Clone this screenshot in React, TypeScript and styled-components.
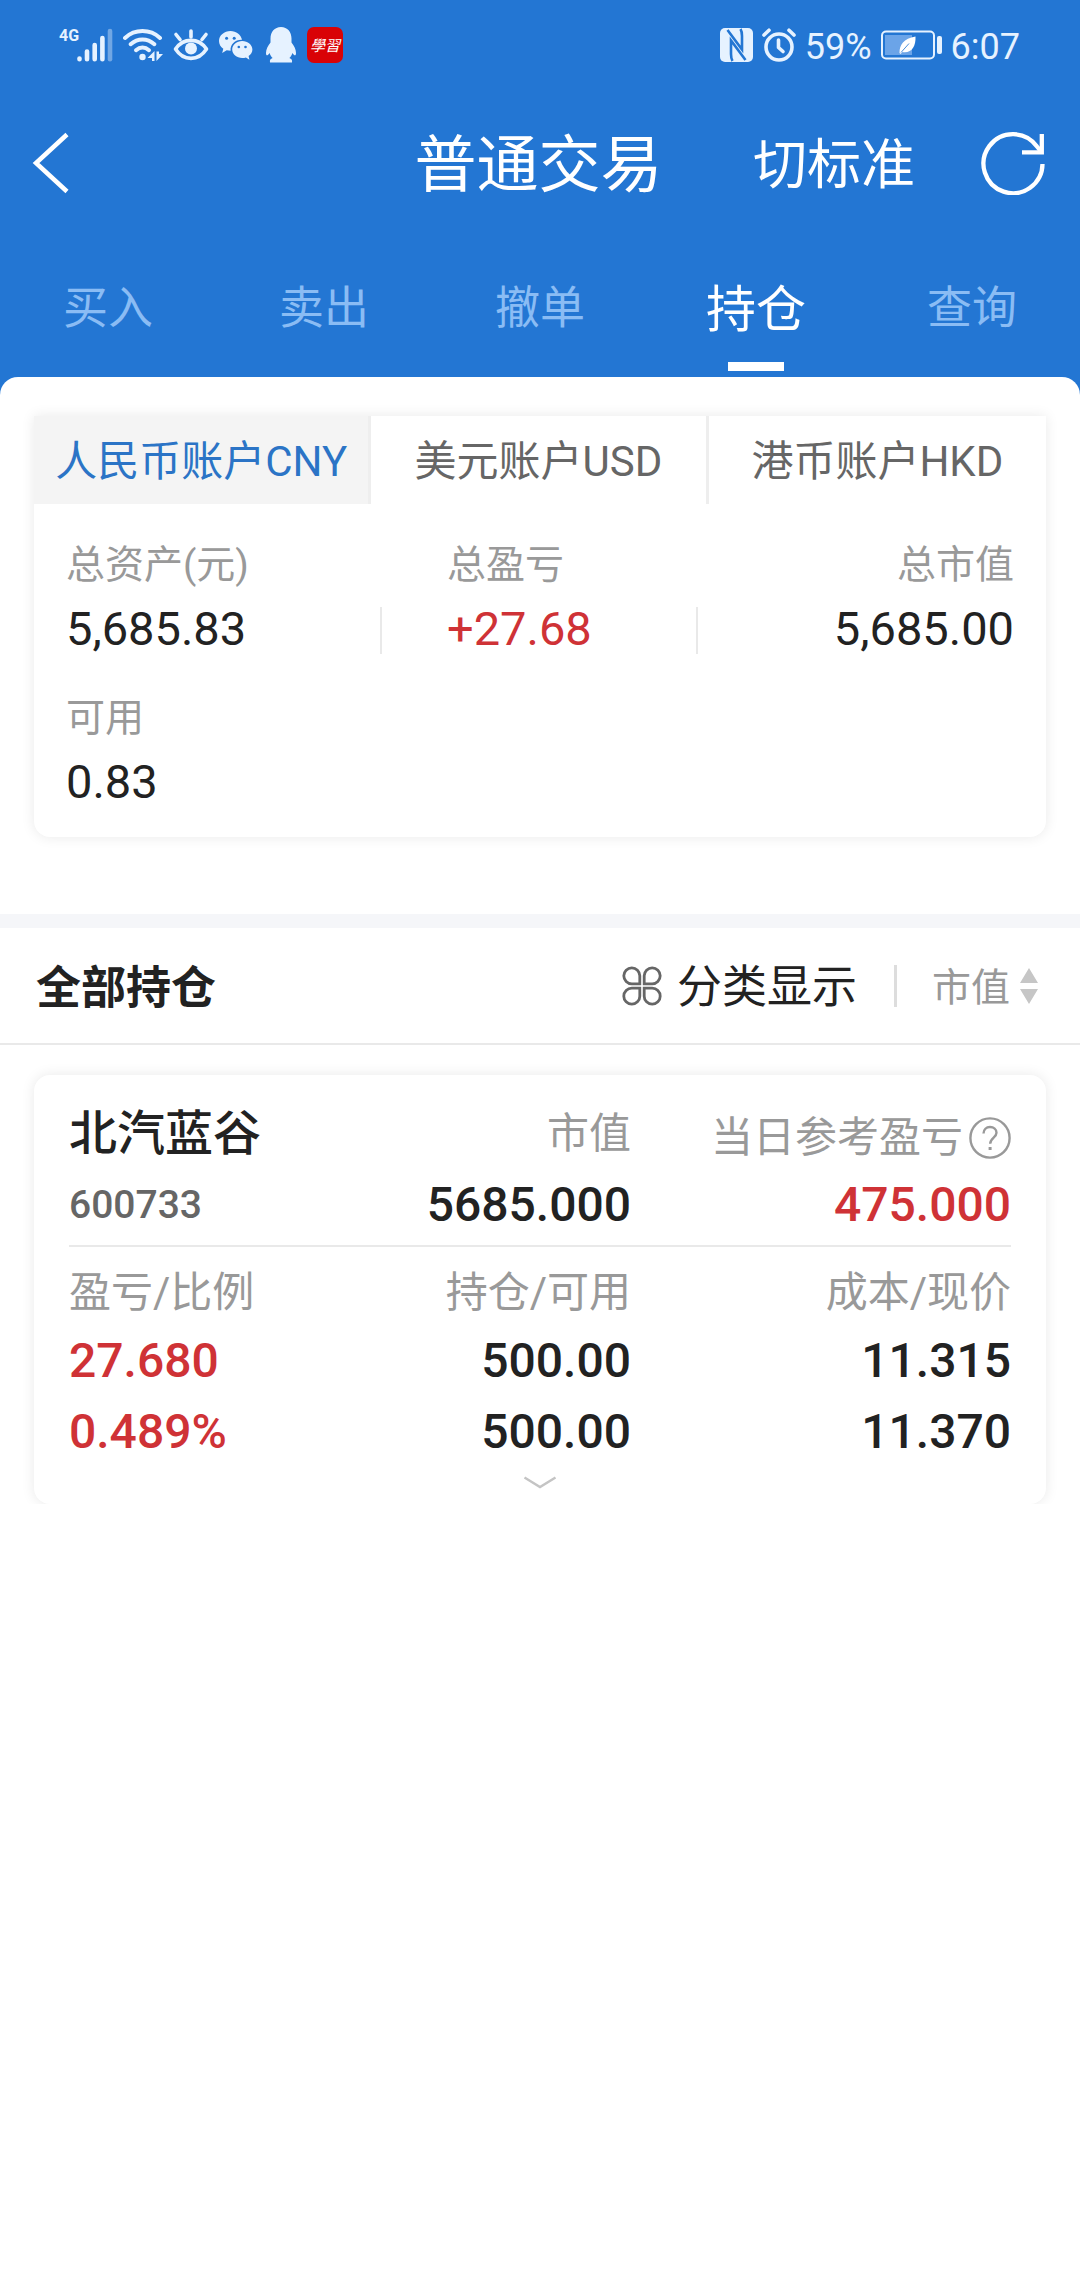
import React, { useState } from "react";
import styled, { createGlobalStyle, css } from "styled-components";

const colors = {
  brand: "#2376d3",
  brandText: "#2b74c6",
  ink: "#222222",
  body: "#666666",
  muted: "#999999",
  line: "#e9e9e9",
  rise: "#cf3236",
};

const GlobalStyle = createGlobalStyle`
  * { box-sizing: border-box; }
  body {
    margin: 0;
    background: #ffffff;
    color: ${colors.ink};
    font-family: Roboto, "Noto Sans CJK SC", sans-serif;
  }
  h1, h2, h3, dl, dt, dd, p { margin: 0; font-weight: 400; }
  svg { display: block; flex: none; }
`;

const plainButton = css`
  appearance: none;
  border: 0;
  margin: 0;
  padding: 0;
  background: none;
  color: inherit;
  font: inherit;
  cursor: pointer;
`;

/* ---------- header ---------- */

const Header = styled.header`
  background: ${colors.brand};
  color: #ffffff;
  padding-bottom: 18px;
`;

const StatusBar = styled.div`
  display: flex;
  align-items: center;
  justify-content: space-between;
  height: 90px;
  padding: 0 60px 0 59px;
  color: #e6f2ff;
`;

const StatusGroup = styled.div<{ $gap: number }>`
  display: flex;
  align-items: center;
  gap: ${(p) => p.$gap}px;
`;

const StatusText = styled.span`
  padding-top: 3px;
  font-size: 36px;
  line-height: 42px;
`;

const Network = styled.div`
  display: flex;
  align-items: flex-start;
`;

const NetworkType = styled.span`
  width: 18px;
  font-size: 16px;
  font-weight: 700;
  line-height: 16px;
  white-space: nowrap;
`;

const AppBadge = styled.span`
  display: flex;
  align-items: center;
  justify-content: center;
  width: 36px;
  height: 36px;
  border-radius: 7px;
  background: #d90206;
  color: #ffffff;
  font-family: "Noto Sans CJK TC", sans-serif;
  font-size: 15px;
  font-style: italic;
  line-height: 20px;
`;

const TitleBar = styled.div`
  display: grid;
  grid-template-columns: 1fr auto 1fr;
  align-items: center;
  height: 146px;
  padding: 0 35px 0 32px;
`;

const Title = styled.h1`
  padding-top: 5px;
  font-size: 62px;
  line-height: 80px;
`;

const TitleActions = styled.div`
  display: flex;
  align-items: center;
  justify-content: flex-end;
  gap: 66px;
`;

const BackButton = styled.button`
  ${plainButton}
  justify-self: start;
`;

const ModeButton = styled.button`
  ${plainButton}
  padding-top: 5px;
  font-size: 54px;
  line-height: 72px;
  white-space: nowrap;
`;

const IconButton = styled.button`
  ${plainButton}
`;

const TradeTabs = styled.nav`
  display: grid;
  grid-template-columns: repeat(5, 1fr);
`;

const TradeTab = styled.button<{ $active: boolean }>`
  ${plainButton}
  position: relative;
  height: 141px;
  padding-bottom: 4px;
  font-size: ${(p) => (p.$active ? 50 : 45)}px;
  color: ${(p) => (p.$active ? "#ffffff" : "#8abcf4")};

  &::after {
    content: "";
    display: ${(p) => (p.$active ? "block" : "none")};
    position: absolute;
    left: 50%;
    bottom: 6px;
    width: 56px;
    height: 9px;
    margin-left: -28px;
    background: #ffffff;
  }
`;

/* ---------- account summary ---------- */

const Sheet = styled.main`
  position: relative;
  margin-top: -18px;
  border-radius: 18px 18px 0 0;
  background: #ffffff;
`;

const AccountSection = styled.section`
  padding: 39px 34px 77px;
  border-bottom: 14px solid #f5f6f9;
`;

const Card = styled.div`
  border-radius: 16px;
  background: #ffffff;
  box-shadow: 0 0 14px rgba(0, 0, 0, 0.09);
`;

const AccountCard = styled(Card)`
  border-radius: 0 0 16px 16px;
  overflow: hidden;
`;

const AccountTabs = styled.div`
  display: grid;
  grid-template-columns: repeat(3, 1fr);
`;

const AccountTab = styled.button<{ $active: boolean }>`
  ${plainButton}
  height: 88px;
  padding-bottom: 5px;
  font-size: 42px;
  white-space: nowrap;
  background: ${(p) => (p.$active ? "#f4f4f4" : "#ffffff")};
  color: ${(p) => (p.$active ? colors.brandText : colors.body)};

  &:not(:last-child) {
    border-right: 3px solid #eeeeee;
  }
`;

const Summary = styled.dl`
  display: grid;
  grid-template-columns: repeat(3, 1fr);
  row-gap: 38px;
  padding: 35px 32px 30px;
`;

const SummaryItem = styled.div<{ $place: "start" | "middle" | "end" }>`
  display: grid;
  row-gap: 16px;
  text-align: ${(p) => (p.$place === "end" ? "right" : "left")};

  dt,
  dd {
    padding-left: ${(p) => (p.$place === "middle" ? 65 : 0)}px;
  }
`;

const SummaryLabel = styled.dt`
  font-size: 39px;
  line-height: 52px;
  color: ${colors.muted};
`;

const SummaryValue = styled.dd<{ $rise?: boolean; $divided?: boolean }>`
  padding-bottom: 3px;
  font-size: 47px;
  line-height: 44px;
  color: ${(p) => (p.$rise ? colors.rise : colors.ink)};
  border-right: ${(p) => (p.$divided ? `2px solid ${colors.line}` : "0")};
`;

/* ---------- positions ---------- */

const ListHeader = styled.div`
  display: flex;
  align-items: center;
  justify-content: space-between;
  height: 117px;
  padding: 0 42px 0 36px;
  border-bottom: 2px solid ${colors.line};
`;

const ListTitle = styled.h2`
  padding-top: 6px;
  font-size: 45px;
  font-weight: 700;
  line-height: 60px;
`;

const ListTools = styled.div`
  display: flex;
  align-items: center;
`;

const ToolText = styled.span`
  padding-top: 5px;
`;

const GroupButton = styled.button`
  ${plainButton}
  display: flex;
  align-items: center;
  gap: 15px;
  height: 42px;
  padding-right: 37px;
  border-right: 3px solid #dddddd;
  font-size: 45px;
  line-height: 42px;
`;

const SortButton = styled.button`
  ${plainButton}
  display: flex;
  align-items: center;
  gap: 10px;
  height: 42px;
  padding-left: 35px;
  font-size: 39px;
  line-height: 42px;
  color: ${colors.muted};
`;

const Positions = styled.section`
  padding: 30px 34px 0;
  overflow: hidden;
`;

const PositionCard = styled(Card)`
  padding: 0 35px;
`;

const PositionHead = styled.div`
  display: grid;
  grid-template-columns: 1fr 1fr 380px;
  row-gap: 7px;
  padding: 31px 0 12px;
  border-bottom: 2px solid ${colors.line};
`;

const StockName = styled.h3`
  font-size: 48px;
  font-weight: 500;
  line-height: 56px;
  white-space: nowrap;
`;

const StockCode = styled.p`
  font-size: 39px;
  font-weight: 500;
  line-height: 56px;
  color: ${colors.body};
`;

const HeadLabel = styled.p`
  font-size: 42px;
  line-height: 56px;
  text-align: right;
  color: ${colors.muted};
`;

const HelpLabel = styled.div`
  display: flex;
  align-items: center;
  justify-content: flex-end;
  gap: 6px;
  font-size: 42px;
  line-height: 64px;
  white-space: nowrap;
  color: ${colors.muted};
`;

const HeadValue = styled.p<{ $rise?: boolean }>`
  font-size: 48px;
  font-weight: 500;
  line-height: 56px;
  text-align: right;
  color: ${(p) => (p.$rise ? colors.rise : colors.ink)};
`;

const PositionTable = styled.table`
  width: 100%;
  table-layout: fixed;
  border-collapse: collapse;
  text-align: right;

  th,
  td {
    padding: 0;
  }
  th:first-child,
  td:first-child {
    text-align: left;
  }
  th:last-child {
    width: 380px;
  }
  th {
    padding: 18px 0 4px;
    font-size: 42px;
    font-weight: 400;
    line-height: 56px;
    color: ${colors.muted};
  }
`;

const Cell = styled.td<{ $rise?: boolean }>`
  font-size: 48px;
  font-weight: 500;
  line-height: 71px;
  color: ${(p) => (p.$rise ? colors.rise : colors.ink)};
`;

const ExpandButton = styled.button`
  ${plainButton}
  display: flex;
  justify-content: center;
  width: 100%;
  height: 37px;
  padding-top: 9px;
`;

/* ---------- icons ---------- */

const SignalIcon = () => (
  <svg width="36" height="34" viewBox="0 0 36 34" stroke="currentColor" strokeWidth="4.6" strokeLinecap="round">
    <path d="M2.5 30.6v.6M10 23.5v7.7M17.7 17v14.2M25.4 10v21.2" />
    <path d="M33 3v28.2" opacity=".4" />
  </svg>
);

const WifiIcon = () => (
  <svg width="40" height="34" viewBox="0 0 40 34" fill="none" stroke="currentColor" strokeWidth="4" strokeLinecap="round">
    <path d="M2 10C12 .8 27 .8 37 10" />
    <path d="M7.600 16.200C14.800 9.800 24.200 9.800 31.400 16.200" />
    <path d="M13 22.200c4-3.500 9-3.500 13 0" />
    <circle cx="19.500" cy="29" r="3.200" fill="currentColor" stroke="none" />
    <path d="M31.500 23v10H29v-3h-4.500zM33.500 33V23.500H36V26h4z" fill="currentColor" stroke="none" />
  </svg>
);

const EyeIcon = () => (
  <svg width="36" height="32" viewBox="0 0 36 32" fill="none" stroke="currentColor" strokeWidth="3.600" strokeLinecap="round">
    <path d="M2.500 20C10.500 8.500 25.500 8.500 33.500 20 25.500 32.500 10.500 32.500 2.500 20z" strokeLinejoin="round" />
    <path d="M18 8V2M7 10.500 3 5.500M29 10.500l4-5" />
    <circle cx="18" cy="19.500" r="6" fill="currentColor" stroke="none" />
  </svg>
);

const WechatIcon = () => (
  <svg width="36" height="30" viewBox="0 0 36 30">
    <path
      fill="currentColor"
      d="M11.500 1C5.200 1 0 5.400 0 11c0 3.200 1.700 6 4.300 7.800L3.200 23l4.500-2.700c1.300.3 2.500.5 3.900.5C10.800 14.500 16.500 9.500 23 9.800 22 4.700 17.200 1 11.500 1z"
    />
    <path
      fill="currentColor"
      d="M23.200 11c-5.500 0-10 3.800-10 8.500s4.500 8.500 10 8.500c1.300 0 2.600-.2 3.700-.6l3.500 2.300-.8-3.700c2.300-1.500 3.800-3.900 3.800-6.500C33.400 14.800 28.800 11 23.200 11z"
    />
    <g fill={colors.brand}>
      <circle cx="7.600" cy="8.200" r="1.500" />
      <circle cx="15.200" cy="8.200" r="1.500" />
      <circle cx="19.800" cy="17" r="1.300" />
      <circle cx="26.500" cy="17" r="1.300" />
    </g>
  </svg>
);

const PenguinIcon = () => (
  <svg width="32" height="36" viewBox="0 0 32 36" fill="currentColor">
    <path d="M16 0C9.500 0 5.500 5 5.500 11.500v4C3 18.500 1 22.500 1 26c0 2.800 1.400 3.300 3.600 0 .6 2 1.600 3.600 3 5-2 .8-3.100 2-2.600 4.500h22c.5-2.500-.6-3.700-2.600-4.500 1.400-1.400 2.400-3 3-5 2.200 3.300 3.600 2.800 3.600 0 0-3.500-2-7.500-4.500-10.500v-4C26.500 5 22.500 0 16 0z" />
  </svg>
);

const NfcIcon = () => (
  <svg width="33" height="34" viewBox="0 0 33 34">
    <rect width="33" height="34" rx="5" fill="currentColor" />
    <path
      d="M7.500 2 22 21.500V8c0-3 0-4.500-1.500-7M25.500 32 11 12.500V26c0 3 0 4.500 1.500 7"
      fill="none"
      stroke={colors.brand}
      strokeWidth="2.600"
    />
  </svg>
);

const AlarmIcon = () => (
  <svg width="34" height="34" viewBox="0 0 34 34" fill="none" stroke="currentColor" strokeWidth="3.600" strokeLinecap="round">
    <circle cx="17" cy="19" r="13" />
    <path d="M2 7l5-4.800M32 7l-5-4.800" />
    <path d="M16.500 12v7.500l4.500 4" strokeLinejoin="round" />
  </svg>
);

const BatteryIcon = () => (
  <svg width="61" height="30" viewBox="0 0 61 30">
    <rect x="1" y="1.500" width="52" height="27" rx="4" fill="none" stroke="currentColor" strokeWidth="2" />
    <rect x="4" y="5" width="27" height="20" fill="#6ba4e8" />
    <path d="M18.500 23c0-8 4-14.500 16-16.500.5 10-4 17-13 15.500L19.500 24z" fill="#ffffff" />
    <path d="M20 22.500l8-9" stroke="#4a8edb" strokeWidth="1" />
    <rect x="56" y="6" width="5" height="18" rx="2" fill="currentColor" />
  </svg>
);

const BackIcon = () => (
  <svg width="38" height="62" viewBox="0 0 38 62" fill="none" stroke="currentColor" strokeWidth="4.500">
    <path d="M35 2.500 4 31l31 28.500" />
  </svg>
);

const RefreshIcon = () => (
  <svg width="64" height="64" viewBox="0 0 64 64" fill="none" stroke="currentColor" strokeWidth="4.300">
    <path d="M61.500 33A29.500 29.500 0 1 1 56 15.500l4 5" />
    <path d="M60.800 3v18.300H41" />
  </svg>
);

const CloverIcon = () => (
  <svg width="40" height="40" viewBox="0 0 40 40" fill="none" stroke={colors.body} strokeWidth="2.800">
    <path d="M17.800 17.800V9.800a8 8 0 1 0-8 8zM22.200 17.800V9.800a8 8 0 1 1 8 8zM17.800 22.200v8a8 8 0 1 1-8-8zM22.200 22.200v8a8 8 0 1 0 8-8z" />
  </svg>
);

const SortIcon = () => (
  <svg width="18" height="36" viewBox="0 0 18 36" fill="#c6c6c6">
    <path d="M9 0l9 15H0zM9 36l9-15H0z" />
  </svg>
);

const HelpIcon = () => (
  <svg width="42" height="42" viewBox="0 0 42 42" fill="none" stroke={colors.muted} strokeWidth="2.400">
    <circle cx="21" cy="21" r="19.600" />
    <path d="M14.500 16.500c0-4 2.800-6.500 6.500-6.500s6.500 2.400 6.500 5.800c0 4.700-6.300 5-6.300 11" />
    <path d="M19.600 31.500h3" strokeWidth="3" />
  </svg>
);

const ExpandIcon = () => (
  <svg width="34" height="14" viewBox="0 0 34 14" fill="none" stroke="#c4c4c4" strokeWidth="2.400">
    <path d="M1.500 1.500 17 11 32.500 1.500" />
  </svg>
);

/* ---------- page ---------- */

const tradeTabs = ["买入", "卖出", "撤单", "持仓", "查询"];
const accounts = ["人民币账户CNY", "美元账户USD", "港币账户HKD"];

export default function App() {
  const [tab, setTab] = useState("持仓");
  const [account, setAccount] = useState(accounts[0]);

  return (
    <>
      <GlobalStyle />
      <Header>
        <StatusBar>
          <StatusGroup $gap={10}>
            <Network>
              <NetworkType>4G</NetworkType>
              <SignalIcon />
            </Network>
            <WifiIcon />
            <EyeIcon />
            <WechatIcon />
            <PenguinIcon />
            <AppBadge>學習</AppBadge>
          </StatusGroup>
          <StatusGroup $gap={9}>
            <NfcIcon />
            <AlarmIcon />
            <StatusText>59%</StatusText>
            <BatteryIcon />
            <StatusText>6:07</StatusText>
          </StatusGroup>
        </StatusBar>
        <TitleBar>
          <BackButton aria-label="返回">
            <BackIcon />
          </BackButton>
          <Title>普通交易</Title>
          <TitleActions>
            <ModeButton>切标准</ModeButton>
            <IconButton aria-label="刷新">
              <RefreshIcon />
            </IconButton>
          </TitleActions>
        </TitleBar>
        <TradeTabs>
          {tradeTabs.map((name) => (
            <TradeTab key={name} $active={name === tab} onClick={() => setTab(name)}>
              {name}
            </TradeTab>
          ))}
        </TradeTabs>
      </Header>

      <Sheet>
        <AccountSection>
          <AccountCard>
            <AccountTabs>
              {accounts.map((name) => (
                <AccountTab key={name} $active={name === account} onClick={() => setAccount(name)}>
                  {name}
                </AccountTab>
              ))}
            </AccountTabs>
            <Summary>
              <SummaryItem $place="start">
                <SummaryLabel>总资产(元)</SummaryLabel>
                <SummaryValue $divided>5,685.83</SummaryValue>
              </SummaryItem>
              <SummaryItem $place="middle">
                <SummaryLabel>总盈亏</SummaryLabel>
                <SummaryValue $rise $divided>
                  +27.68
                </SummaryValue>
              </SummaryItem>
              <SummaryItem $place="end">
                <SummaryLabel>总市值</SummaryLabel>
                <SummaryValue>5,685.00</SummaryValue>
              </SummaryItem>
              <SummaryItem $place="start">
                <SummaryLabel>可用</SummaryLabel>
                <SummaryValue>0.83</SummaryValue>
              </SummaryItem>
            </Summary>
          </AccountCard>
        </AccountSection>

        <ListHeader>
          <ListTitle>全部持仓</ListTitle>
          <ListTools>
            <GroupButton>
              <CloverIcon />
              <ToolText>分类显示</ToolText>
            </GroupButton>
            <SortButton>
              <ToolText>市值</ToolText>
              <SortIcon />
            </SortButton>
          </ListTools>
        </ListHeader>

        <Positions>
          <PositionCard>
            <PositionHead>
              <StockName>北汽蓝谷</StockName>
              <HeadLabel>市值</HeadLabel>
              <HelpLabel>
                当日参考盈亏
                <IconButton aria-label="说明">
                  <HelpIcon />
                </IconButton>
              </HelpLabel>
              <StockCode>600733</StockCode>
              <HeadValue>5685.000</HeadValue>
              <HeadValue $rise>475.000</HeadValue>
            </PositionHead>
            <PositionTable>
              <thead>
                <tr>
                  <th scope="col">盈亏/比例</th>
                  <th scope="col">持仓/可用</th>
                  <th scope="col">成本/现价</th>
                </tr>
              </thead>
              <tbody>
                <tr>
                  <Cell $rise>27.680</Cell>
                  <Cell>500.00</Cell>
                  <Cell>11.315</Cell>
                </tr>
                <tr>
                  <Cell $rise>0.489%</Cell>
                  <Cell>500.00</Cell>
                  <Cell>11.370</Cell>
                </tr>
              </tbody>
            </PositionTable>
            <ExpandButton aria-label="展开">
              <ExpandIcon />
            </ExpandButton>
          </PositionCard>
        </Positions>
      </Sheet>
    </>
  );
}
